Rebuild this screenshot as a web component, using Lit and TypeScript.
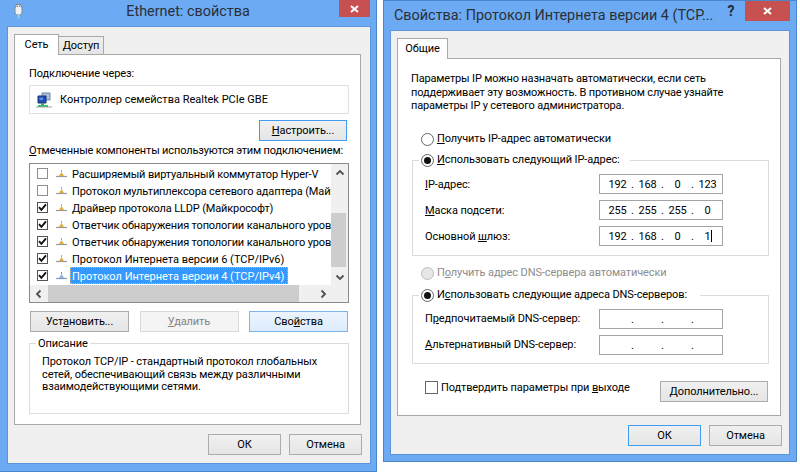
import { LitElement, html, css, svg } from "lit";
import { customElement } from "lit/decorators.js";

const netIcon = (sel = false) => html`<svg class="nic" width="11" height="8" viewBox="0 0 11 8">
  <path d="M0 6.5H11" stroke="${sel ? "#7f9cc0" : "#9a9a9a"}" stroke-width="1.2"/>
  <path d="M5.5 2L8 6H3Z" fill="${sel ? "#8fb0d8" : "#dfae3c"}"/>
  <path d="M5.5 0V2" stroke="${sel ? "#6f8fb5" : "#a8a8a8"}"/>
</svg>`;

const check = html`<svg width="9" height="9" viewBox="0 0 9 9"><path d="M1 4.2L3.4 6.8L8 1.4" fill="none" stroke="#111" stroke-width="1.9"/></svg>`;

const chev = (d: string) => {
  const p: Record<string, string> = {
    up: "M1.5 6.5L5 3L8.5 6.5",
    down: "M1.5 3.5L5 7L8.5 3.5",
    left: "M6.5 1.5L3 5L6.5 8.5",
    right: "M3.5 1.5L7 5L3.5 8.5",
  };
  return html`<svg width="10" height="10" viewBox="0 0 10 10"><path d="${p[d]}" fill="none" stroke="#505050" stroke-width="1.8"/></svg>`;
};

const closeX = svg`<path d="M1 1L8 7M8 1L1 7" fill="none" stroke="#fff" stroke-width="2"/>`;

const rows: [boolean, string][] = [
  [false, "Расширяемый виртуальный коммутатор Hyper-V"],
  [false, "Протокол мультиплексора сетевого адаптера (Майкрософт)"],
  [true, "Драйвер протокола LLDP (Майкрософт)"],
  [true, "Ответчик обнаружения топологии канального уровня"],
  [true, "Ответчик обнаружения топологии канального уровня"],
  [true, "Протокол Интернета версии 6 (TCP/IPv6)"],
  [true, "Протокол Интернета версии 4 (TCP/IPv4)"],
];

@customElement("app-root")
export class AppRoot extends LitElement {
  static styles = css`
    :host {
      display: block;
      position: relative;
      width: 800px;
      height: 475px;
      overflow: hidden;
      background: #fff;
      font-family: Roboto, "Noto Sans", sans-serif;
      font-size: 11px;
      line-height: 14px;
      letter-spacing: -0.1px;
      color: #000;
    }
    u { text-underline-offset: 1px; }
    .win {
      position: absolute;
      top: 0;
      box-sizing: border-box;
      display: flex;
      flex-direction: column;
      background: #6cabf4;
      border: 1px solid #4a86c8;
    }
    .w1 { left: 0; width: 377px; height: 472px; border-left: 0; border-top: 0; }
    .w2 { left: 383px; width: 414px; height: 462px; }
    .bar { flex: none; color: #2b2f36; font-size: 14.4px; letter-spacing: 0; }
    .w1 .bar {
      height: 26px;
      display: grid;
      grid-template-columns: 1fr auto 1fr;
    }
    .w2 .bar { height: 29px; display: flex; }
    .ticon { margin: 4px 0 0 14px; display: block; }
    .w1 .ttl { padding-top: 3px; line-height: 18px; }
    .w2 .ttl { padding: 6px 0 0 10px; line-height: 18px; width: 326px; flex: none; box-sizing: border-box; white-space: nowrap; }
    .help {
      margin: 1px 0 0 11px;
      font-weight: 700;
      font-size: 14px;
      line-height: 18px;
      color: #222c38;
      width: 20px;
      text-align: center;
    }
    .close {
      background: #c75050;
      display: flex;
      align-items: center;
      justify-content: center;
      box-sizing: border-box;
    }
    .w1 .close { width: 31px; height: 17px; justify-self: end; margin-right: 6px; }
    .w2 .close { width: 45px; height: 20px; margin-left: auto; margin-right: 6px; }
    .client {
      flex: 1;
      display: flex;
      flex-direction: column;
      background: #f0f0f0;
      border: 1px solid #5c96d8;
      padding: 7px 0 0 6px;
    }
    .w1 .client { margin: 0 5px 7px 7px; }
    .w2 .client { margin: 0 6px 6px 6px; }
    .tabs { display: flex; align-items: flex-end; height: 20px; flex: none; position: relative; }
    .tab {
      box-sizing: border-box;
      border: 1px solid #a8a8a8;
      border-bottom: 0;
      text-align: center;
    }
    .tab.on {
      height: 21px;
      margin-bottom: -1px;
      background: #fff;
      position: relative;
      z-index: 1;
      line-height: 19px;
    }
    .tab.off {
      height: 18px;
      border-left: 0;
      background: linear-gradient(#f0f0f0, #e5e5e5);
      line-height: 18px;
    }
    .w1 .tab.on { width: 45px; }
    .w1 .tab.off { width: 45px; }
    .w2 .tab.on { width: 51px; }
    .page {
      flex: none;
      box-sizing: border-box;
      background: #fff;
      border: 1px solid #a8a8a8;
      display: flex;
      flex-direction: column;
      align-items: flex-start;
    }
    .w1 .page { width: 347px; height: 371px; padding: 12px 0 0 14px; }
    .w2 .page { width: 384px; height: 358px; padding: 13px 0 0 13px; }
    .btn {
      box-sizing: border-box;
      height: 21px;
      border: 1px solid #acacac;
      background: linear-gradient(#f0f0f0, #e5e5e5);
      text-align: center;
      line-height: 19px;
      flex: none;
    }
    .btn.focus { border-color: #3f9cf0; }
    .btn.hover { border-color: #7eb4ea; background: linear-gradient(#ecf4fc, #dcecfc); }
    .btn.dis { border-color: #d9d9d9; background: #f4f4f4; color: #838383; }
    .foot { flex: none; display: flex; justify-content: flex-end; gap: 8px; margin-top: 9px; }
    .w1 .foot { padding-right: 8px; }
    .w2 .foot { padding-right: 7px; }
    .foot .btn { width: 73px; }
    .adapter {
      box-sizing: border-box;
      width: 320px;
      height: 29px;
      margin-top: 4px;
      border: 1px solid #e0e0e0;
      display: flex;
      align-items: center;
      gap: 8px;
      padding-left: 6px;
      letter-spacing: 0;
    }
    .cfg { width: 88px; margin: 6px 0 0 230px; }
    .lbl2 { margin-top: 3px; white-space: nowrap; letter-spacing: -0.15px; }
    .list {
      box-sizing: border-box;
      width: 320px;
      height: 140px;
      margin-top: 5px;
      border: 1px solid #8a8a8a;
      display: grid;
      grid-template-columns: 301px 17px;
      grid-template-rows: 121px 17px;
    }
    .items { padding-top: 1px; overflow: hidden; white-space: nowrap; }
    .item { display: flex; align-items: flex-start; height: 17px; padding-left: 7px; }
    .cb {
      box-sizing: border-box;
      flex: none;
      display: flex;
      align-items: center;
      justify-content: center;
      background: #fff;
      border: 1px solid #8e8e8e;
    }
    .cb.on { border-color: #555; }
    .item .cb { width: 11px; height: 11px; margin: 3px 8px 0 0; }
    .nic { flex: none; display: block; }
    .ico { flex: none; width: 14px; margin-top: 5px; }
    .txt { padding: 0 4px 0 2px; height: 17px; line-height: 19px; letter-spacing: -0.15px; }
    .txt.full { letter-spacing: 0; }
    .txt.sel { background: #3399ff; color: #fff; outline: 1px dotted #f0b070; outline-offset: -1px; }
    .vs { background: #f0f0f0; display: flex; flex-direction: column; }
    .arr { width: 17px; height: 17px; display: flex; align-items: center; justify-content: center; flex: none; }
    .vthumb { width: 15px; height: 54px; margin-top: 32px; background: #cdcdcd; }
    .vs .arr:last-child { margin-top: auto; }
    .hs { background: #f0f0f0; display: flex; }
    .hthumb { width: 251px; background: #cdcdcd; margin-left: 1px; }
    .hs .arr:last-child { margin-left: auto; }
    .corner { background: #f0f0f0; }
    .acts { display: flex; justify-content: space-between; width: 318px; margin: 8px 0 0 1px; }
    .acts .btn { width: 99px; }
    .group { box-sizing: border-box; border: 1px solid #dcdcdc; }
    .legend { width: fit-content; background: #fff; margin-top: -8px; }
    .desc { width: 320px; height: 71px; margin-top: 11px; }
    .desc .legend { margin-left: 6px; padding: 0 2px; margin-top: -7px; }
    .desc p { margin: 5px 0 0 12px; line-height: 12.6px; }
    .para { margin: 0; height: 40px; line-height: 13.5px; white-space: nowrap; letter-spacing: -0.16px; }
    .radio-row { display: flex; align-items: center; gap: 3px; height: 14px; }
    .radio-row > span:last-child { line-height: 16px; }
    .radio {
      box-sizing: border-box;
      width: 13px;
      height: 13px;
      border-radius: 50%;
      border: 1px solid #666;
      background: #fff;
      display: flex;
      align-items: center;
      justify-content: center;
      flex: none;
    }
    .radio i { width: 7px; height: 7px; border-radius: 50%; background: #111; display: block; }
    .radio.dis { background: #e6e6e6; border-color: #bcbcbc; }
    .dim { color: #8d8d8d; }
    .r1 { margin: 20px 0 0 10px; }
    .r3 { margin: 10px 0 0 10px; }
    .g1, .g2 { width: 357px; margin-left: 1px; }
    .g1 { margin-top: 14px; height: 96px; }
    .g2 { margin-top: 15px; height: 69px; }
    .g1 .legend, .g2 .legend { margin-left: 6px; padding: 0 10px 0 2px; }
    .g2 .legend { padding-right: 13px; }
    .fields { margin: 7px 0 0 12px; display: grid; grid-template-columns: 174px 124px; row-gap: 6px; align-items: center; }
    .g1 .fields > span { line-height: 16px; padding-top: 2px; }
    .ip {
      box-sizing: border-box;
      height: 20px;
      border: 1px solid #a4a4a4;
      display: flex;
      padding-left: 5px;
      line-height: 20px;
    }
    .seg { width: 25px; text-align: center; position: relative; }
    .dot { width: 5px; text-align: center; }
    .caret { position: absolute; left: 16px; top: 3px; width: 1px; height: 12px; background: #000; }
    .confirm { display: flex; width: 343px; margin: 17px 0 0 14px; align-items: flex-start; }
    .confirm .cb { width: 13px; height: 13px; border-color: #666; margin-right: 3px; }
    .confirm .adv { width: 108px; margin-left: auto; }
  `;

  private ip(v: string[], caret = false) {
    return html`<div class="ip">
      ${v.map(
        (s, i) => html`<span class="seg">${s}${caret && i === 3 ? html`<b class="caret"></b>` : ""}</span>${i < 3
            ? html`<span class="dot">.</span>`
            : ""}`
      )}
    </div>`;
  }

  private radio(on: boolean, dis = false) {
    return html`<span class="radio ${dis ? "dis" : ""}">${on ? html`<i></i>` : ""}</span>`;
  }

  private win1() {
    return html`<section class="win w1">
      <div class="bar">
        <svg class="ticon" width="9" height="15" viewBox="0 0 9 15">
          <path d="M2 0.5H7V3H8V9L6.5 11H2.5L1 9V3H2Z" fill="#eef2f4" stroke="#7d8a92"/>
          <path d="M3 1.5H4V3H3ZM5 1.5H6V3H5Z" fill="#7d8a92"/>
          <path d="M3 11H6V14.5H3Z" fill="#6fd0e8"/>
        </svg>
        <div class="ttl">Ethernet: свойства</div>
        <div class="close"><svg width="9" height="8" viewBox="0 0 9 8">${closeX}</svg></div>
      </div>
      <div class="client">
        <div class="tabs">
          <div class="tab on">Сеть</div>
          <div class="tab off">Доступ</div>
        </div>
        <div class="page">
          <div>Подключение через:</div>
          <div class="adapter">
            <svg width="16" height="16" viewBox="0 0 16 16">
              <path d="M6 1H14V8H6Z" fill="#a9bfdc" stroke="#6f86a6"/>
              <path d="M2 4H10V11H2Z" fill="#1f4fb8" stroke="#1c2f6e"/>
              <path d="M3.5 5.5H7V8H3.5Z" fill="#5c8ee6"/>
              <path d="M5 11H8V13H5Z" fill="#3aa85a"/>
              <path d="M2 13H12V15H2Z" fill="#35c060"/>
              <path d="M0 15H16" stroke="#a0a0a0"/>
            </svg>
            <span>Контроллер семейства Realtek PCIe GBE</span>
          </div>
          <div class="btn focus cfg"><u>Н</u>астроить...</div>
          <div class="lbl2"><u>О</u>тмеченные компоненты используются этим подключением:</div>
          <div class="list">
            <div class="items">
              ${rows.map(
                ([c, t], i) => html`<div class="item">
                  <span class="cb ${c ? "on" : ""}">${c ? check : ""}</span>
                  <span class="ico">${netIcon(i === 6)}</span>
                  <span class="txt ${i >= 5 ? "full" : ""} ${i === 6 ? "sel" : ""}">${t}</span>
                </div>`
              )}
            </div>
            <div class="vs">
              <span class="arr">${chev("up")}</span>
              <span class="vthumb"></span>
              <span class="arr">${chev("down")}</span>
            </div>
            <div class="hs">
              <span class="arr">${chev("left")}</span>
              <span class="hthumb"></span>
              <span class="arr">${chev("right")}</span>
            </div>
            <div class="corner"></div>
          </div>
          <div class="acts">
            <div class="btn">Уст<u>а</u>новить...</div>
            <div class="btn dis"><u>У</u>далить</div>
            <div class="btn hover">Сво<u>й</u>ства</div>
          </div>
          <div class="group desc">
            <div class="legend">Описание</div>
            <p>Протокол TCP/IP - стандартный протокол глобальных<br />сетей, обеспечивающий связь между различными<br />взаимодействующими сетями.</p>
          </div>
        </div>
        <div class="foot">
          <div class="btn">ОК</div>
          <div class="btn">Отмена</div>
        </div>
      </div>
    </section>`;
  }

  private win2() {
    const empty = ["", "", "", ""];
    return html`<section class="win w2">
      <div class="bar">
        <div class="ttl">Свойства: Протокол Интернета версии 4 (TCP...</div>
        <div class="help">?</div>
        <div class="close"><svg width="9" height="8" viewBox="0 0 9 8">${closeX}</svg></div>
      </div>
      <div class="client">
        <div class="tabs"><div class="tab on">Общие</div></div>
        <div class="page">
          <p class="para">Параметры IP можно назначать автоматически, если сеть<br />поддерживает эту возможность. В противном случае узнайте<br />параметры IP у сетевого администратора.</p>
          <div class="radio-row r1">${this.radio(false)}<span><u>П</u>олучить IP-адрес автоматически</span></div>
          <div class="group g1">
            <div class="legend radio-row">${this.radio(true)}<span><u>И</u>спользовать следующий IP-адрес:</span></div>
            <div class="fields">
              <span><u>I</u>P-адрес:</span>${this.ip(["192", "168", "0", "123"])}
              <span><u>М</u>аска подсети:</span>${this.ip(["255", "255", "255", "0"])}
              <span>Основной <u>ш</u>люз:</span>${this.ip(["192", "168", "0", "1"], true)}
            </div>
          </div>
          <div class="radio-row r3 dim">${this.radio(false, true)}<span>П<u>о</u>лучить адрес DNS-сервера автоматически</span></div>
          <div class="group g2">
            <div class="legend radio-row">${this.radio(true)}<span>И<u>с</u>пользовать следующие адреса DNS-серверов:</span></div>
            <div class="fields">
              <span>П<u>р</u>едпочитаемый DNS-сервер:</span>${this.ip(empty)}
              <span><u>А</u>льтернативный DNS-сервер:</span>${this.ip(empty)}
            </div>
          </div>
          <div class="confirm">
            <span class="cb"></span>
            <span>Подтвердить параметры при <u>в</u>ыходе</span>
            <div class="btn adv"><u>Д</u>ополнительно...</div>
          </div>
        </div>
        <div class="foot">
          <div class="btn focus">ОК</div>
          <div class="btn">Отмена</div>
        </div>
      </div>
    </section>`;
  }

  render() {
    return html`${this.win1()}${this.win2()}`;
  }
}
